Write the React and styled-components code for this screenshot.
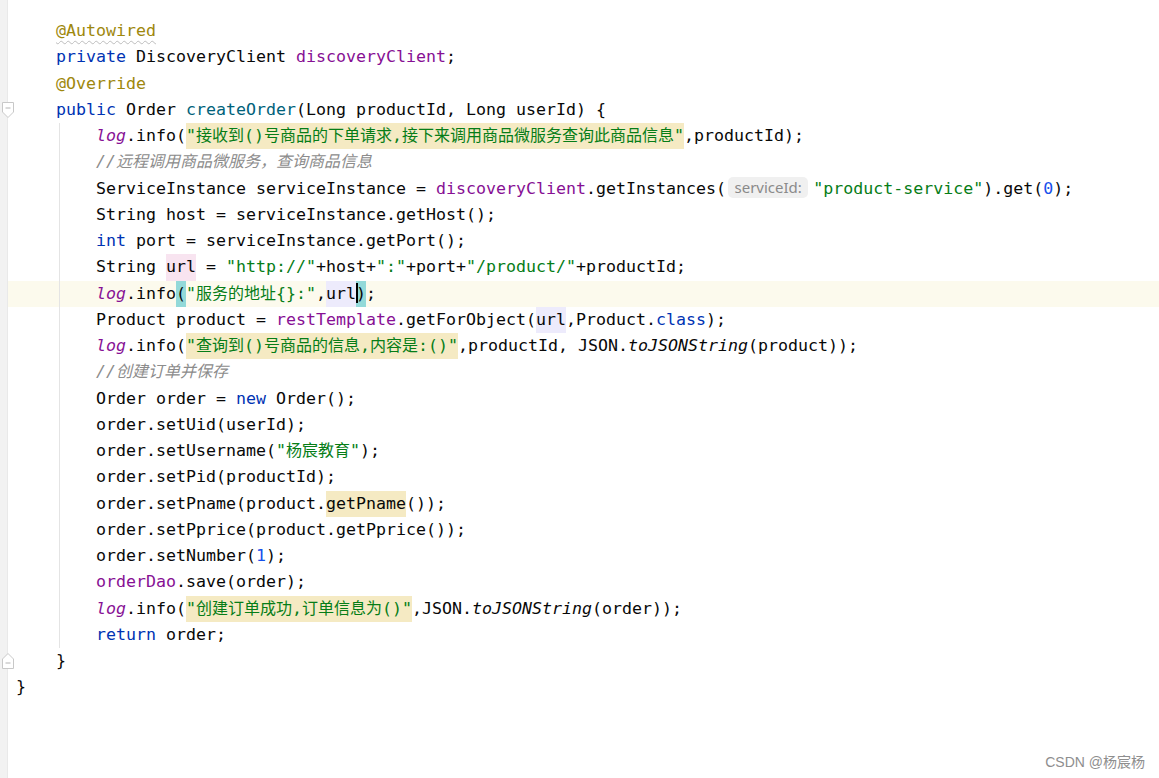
import React from "react";
import styled, { createGlobalStyle, css } from "styled-components";

const GlobalStyle = createGlobalStyle`
  html, body { margin: 0; padding: 0; background: #ffffff; }
  body { overflow: hidden; }
`;

const LINE_H = "26.25px";

const Editor = styled.div`
  position: relative;
  height: 778px;
  box-sizing: border-box;
  padding-top: 18px;
  background: linear-gradient(to right, #f2f2f2 0 7px, #e9e9e9 7px 8px, #ffffff 8px);
  font-family: "DejaVu Sans Mono", "Noto Sans CJK SC", monospace;
  font-size: 16.61px;
  color: #080808;
  overflow: hidden;
`;

const Line = styled.div`
  display: flex;
  height: ${LINE_H};
  line-height: ${LINE_H};
  margin-left: 8px;
  background: ${(p) => (p.$current ? "#fcfaed" : "transparent")};
`;

const FoldSlot = styled.div`
  position: relative;
  width: 8px;
  flex-shrink: 0;
`;

const FoldIcon = styled.svg`
  position: absolute;
  left: -6px;
  top: 50%;
  transform: translateY(-50%);
  width: 12px;
  height: 16px;
`;

const Code = styled.div`
  flex: 1;
  white-space: pre;
  ${(p) =>
    p.$guide &&
    css`
      background: linear-gradient(#e4e4e4, #e4e4e4) 43px 0 / 1px 100% no-repeat;
    `}
`;

const COLORS = {
  plain: "#080808",
  kw: "#0033b3",
  ann: "#9e880d",
  field: "#871094",
  log: "#871094",
  decl: "#00627a",
  str: "#067d17",
  num: "#1750eb",
  comment: "#8c8c8c",
  ital: "#080808",
};

const HL = {
  beige: "#f5eac3",
  pink: "#f8e4f0",
  lav: "#edebfc",
  teal: "#93d9d9",
};

const Tok = styled.span`
  color: ${(p) => COLORS[p.$kind] || COLORS.plain};
  font-style: ${(p) =>
    p.$kind === "log" || p.$kind === "comment" || p.$kind === "ital" ? "italic" : "normal"};
  ${(p) =>
    p.$hl &&
    css`
      display: inline-block;
      height: ${LINE_H};
      background: ${HL[p.$hl]};
    `}
  ${(p) =>
    p.$wavy &&
    css`
      text-decoration: underline wavy #bdbdbd 1px;
      text-underline-offset: 4px;
    `}
`;

const Cjk = styled.span`
  font-family: "Noto Sans CJK SC", sans-serif;
  font-size: 16px;
  line-height: 1;
`;

const Hint = styled.span`
  display: inline-block;
  height: 21px;
  line-height: 21px;
  margin: 0 5px 0 2px;
  padding: 0 6.5px;
  vertical-align: 1px;
  border-radius: 5px;
  background: #f0f0f0;
  color: #8a8a8a;
  font-family: "Noto Sans", "Liberation Sans", sans-serif;
  font-size: 15px;
  font-style: normal;
`;

const Caret = styled.span`
  display: inline-block;
  width: 0;
  height: 20px;
  vertical-align: -4px;
  border-left: 2px solid #000000;
  margin-right: -2px;
  position: relative;
  z-index: 1;
`;

const Watermark = styled.div`
  position: absolute;
  right: 14px;
  bottom: 7px;
  font-family: "Liberation Sans", "Noto Sans CJK SC", sans-serif;
  font-size: 14px;
  color: #8e8e8e;
`;

const FoldStart = () => (
  <FoldIcon viewBox="0 0 12 16">
    <path d="M0.5 0.5 H11.5 V10 L6 15.5 L0.5 10 Z" fill="#ffffff" stroke="#c8c8c8" />
    <path d="M3.5 6 H8.5" stroke="#b4b4b4" />
  </FoldIcon>
);

const FoldEnd = () => (
  <FoldIcon viewBox="0 0 12 16">
    <path d="M0.5 15.5 H11.5 V6 L6 0.5 L0.5 6 Z" fill="#ffffff" stroke="#c8c8c8" />
    <path d="M3.5 10 H8.5" stroke="#b4b4b4" />
  </FoldIcon>
);

const I1 = "    ";
const I2 = "        ";

const LINES = [
  { ind: I1, t: [["ann", "@Autowired", null, true]] },
  { ind: I1, t: [["kw", "private"], ["plain", " DiscoveryClient "], ["field", "discoveryClient"], ["plain", ";"]] },
  { ind: I1, t: [["ann", "@Override"]] },
  {
    ind: I1,
    fold: "start",
    t: [["kw", "public"], ["plain", " Order "], ["decl", "createOrder"], ["plain", "(Long productId, Long userId) {"]],
  },
  {
    ind: I2,
    guide: true,
    t: [
      ["log", "log"],
      ["plain", ".info("],
      ["str", "\"接收到()号商品的下单请求,接下来调用商品微服务查询此商品信息\"", "beige"],
      ["plain", ",productId);"],
    ],
  },
  { ind: I2, guide: true, t: [["comment", "//远程调用商品微服务，查询商品信息"]] },
  {
    ind: I2,
    guide: true,
    t: [
      ["plain", "ServiceInstance serviceInstance = "],
      ["field", "discoveryClient"],
      ["plain", ".getInstances("],
      ["hint", "serviceId:"],
      ["str", "\"product-service\""],
      ["plain", ").get("],
      ["num", "0"],
      ["plain", ");"],
    ],
  },
  { ind: I2, guide: true, t: [["plain", "String host = serviceInstance.getHost();"]] },
  { ind: I2, guide: true, t: [["kw", "int"], ["plain", " port = serviceInstance.getPort();"]] },
  {
    ind: I2,
    guide: true,
    t: [
      ["plain", "String "],
      ["plain", "url", "pink"],
      ["plain", " = "],
      ["str", "\"http://\""],
      ["plain", "+host+"],
      ["str", "\":\""],
      ["plain", "+port+"],
      ["str", "\"/product/\""],
      ["plain", "+productId;"],
    ],
  },
  {
    ind: I2,
    guide: true,
    current: true,
    t: [
      ["log", "log"],
      ["plain", ".info"],
      ["plain", "(", "teal"],
      ["str", "\"服务的地址{}:\""],
      ["plain", ","],
      ["plain", "url", "lav"],
      ["caret", ""],
      ["plain", ")", "teal"],
      ["plain", ";"],
    ],
  },
  {
    ind: I2,
    guide: true,
    t: [
      ["plain", "Product product = "],
      ["field", "restTemplate"],
      ["plain", ".getForObject("],
      ["plain", "url", "lav"],
      ["plain", ",Product."],
      ["kw", "class"],
      ["plain", ");"],
    ],
  },
  {
    ind: I2,
    guide: true,
    t: [
      ["log", "log"],
      ["plain", ".info("],
      ["str", "\"查询到()号商品的信息,内容是:()\"", "beige"],
      ["plain", ",productId, JSON."],
      ["ital", "toJSONString"],
      ["plain", "(product));"],
    ],
  },
  { ind: I2, guide: true, t: [["comment", "//创建订单并保存"]] },
  { ind: I2, guide: true, t: [["plain", "Order order = "], ["kw", "new"], ["plain", " Order();"]] },
  { ind: I2, guide: true, t: [["plain", "order.setUid(userId);"]] },
  { ind: I2, guide: true, t: [["plain", "order.setUsername("], ["str", "\"杨宸教育\""], ["plain", ");"]] },
  { ind: I2, guide: true, t: [["plain", "order.setPid(productId);"]] },
  {
    ind: I2,
    guide: true,
    t: [["plain", "order.setPname(product."], ["plain", "getPname", "beige"], ["plain", "());"]],
  },
  { ind: I2, guide: true, t: [["plain", "order.setPprice(product.getPprice());"]] },
  { ind: I2, guide: true, t: [["plain", "order.setNumber("], ["num", "1"], ["plain", ");"]] },
  { ind: I2, guide: true, t: [["field", "orderDao"], ["plain", ".save(order);"]] },
  {
    ind: I2,
    guide: true,
    t: [
      ["log", "log"],
      ["plain", ".info("],
      ["str", "\"创建订单成功,订单信息为()\"", "beige"],
      ["plain", ",JSON."],
      ["ital", "toJSONString"],
      ["plain", "(order));"],
    ],
  },
  { ind: I2, guide: true, t: [["kw", "return"], ["plain", " order;"]] },
  { ind: I1, fold: "end", t: [["plain", "}"]] },
  { ind: "", t: [["plain", "}"]] },
];

const CJK_RE = /([\u3000-\u303f\u4e00-\u9fff\uff00-\uffef]+)/;

function splitCjk(text) {
  return text.split(CJK_RE).map((part, i) =>
    i % 2 === 1 ? <Cjk key={i}>{part}</Cjk> : part
  );
}

function renderToken([kind, text, hl, wavy], i) {
  if (kind === "hint") return <Hint key={i}>{text}</Hint>;
  if (kind === "caret") return <Caret key={i} />;
  return (
    <Tok key={i} $kind={kind} $hl={hl} $wavy={wavy}>
      {splitCjk(text)}
    </Tok>
  );
}

export default function App() {
  return (
    <>
      <GlobalStyle />
      <Editor>
        {LINES.map((line, idx) => (
          <Line key={idx} $current={line.current}>
            <FoldSlot>
              {line.fold === "start" && <FoldStart />}
              {line.fold === "end" && <FoldEnd />}
            </FoldSlot>
            <Code $guide={line.guide}>
              {line.ind}
              {line.t.map(renderToken)}
            </Code>
          </Line>
        ))}
        <Watermark>CSDN @杨宸杨</Watermark>
      </Editor>
    </>
  );
}
